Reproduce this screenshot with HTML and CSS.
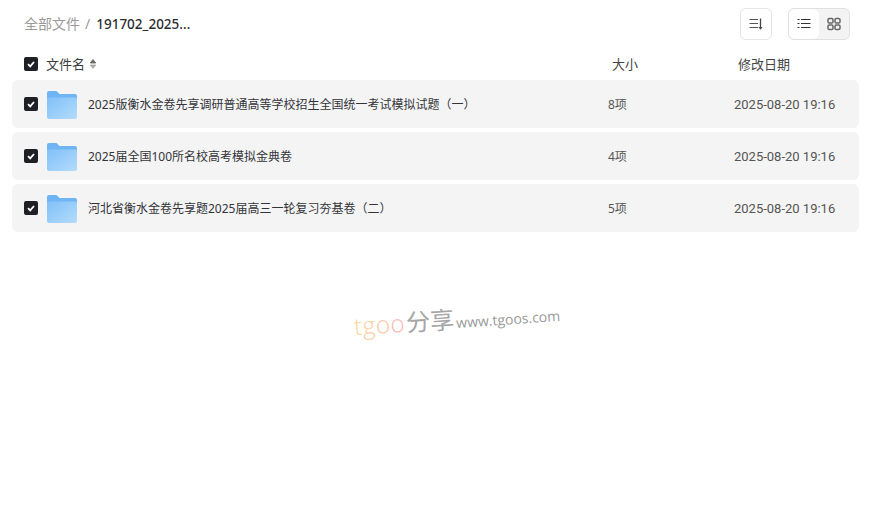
FILE: index.html
```html
<!DOCTYPE html>
<html lang="zh-CN">
<head>
<meta charset="utf-8">
<title>文件列表</title>
<link rel="stylesheet" href="styles.css">
</head>
<body>
<div class="page">
  <header class="topbar">
    <nav class="crumbs">
      <span class="crumb-root">全部文件</span>
      <span class="crumb-sep">/</span>
      <span class="crumb-current">191702_2025...</span>
    </nav>
    <div class="tools">
      <button class="tool-btn" type="button" aria-label="排序">
        <svg width="14" height="14" viewBox="0 0 14 14" fill="none" stroke="#555" stroke-width="1.2"><path d="M0.500 2.500h8.500M0.500 6.500h8.500M0.500 10.500h8.500"/><path d="M11.500 1.500v10" stroke="#444" stroke-width="1.3"/><path d="M9.500 10l2 2.800 2-2.800z" fill="#444" stroke="none"/></svg>
      </button>
      <div class="view-switch">
        <button class="view-btn active" type="button" aria-label="列表">
          <svg width="14" height="14" viewBox="0 0 14 14" fill="none" stroke="#333" stroke-width="1.2"><path d="M0.500 2.500h2M0.500 6.500h2M0.500 10.500h2M4 2.500h9.500M4 6.500h9.500M4 10.500h9.500"/></svg>
        </button>
        <button class="view-btn" type="button" aria-label="网格">
          <svg width="14" height="14" viewBox="0 0 14 14" fill="none" stroke="#666" stroke-width="1.5"><rect x="1" y="1.500" width="5" height="4.500" rx="1.300"/><rect x="8" y="1.500" width="5" height="4.500" rx="1.300"/><rect x="1" y="8" width="5" height="4.500" rx="1.300"/><rect x="8" y="8" width="5" height="4.500" rx="1.300"/></svg>
        </button>
      </div>
    </div>
  </header>

  <div class="list-head">
    <span class="check"><svg width="10" height="10" viewBox="0 0 10 10" fill="none" stroke="#fff" stroke-width="1.8"><path d="M2 5.200l2.200 2.200L8 3"/></svg></span>
    <span class="head-name">文件名
      <svg class="sort" width="8" height="12" viewBox="0 0 8 12"><path d="M4 1.500L6.800 5H1.200z" fill="#666" stroke="#666" stroke-linejoin="round" stroke-width=".8"/><path d="M4 10.500L1.200 7h5.600z" fill="#aaa" stroke="#aaa" stroke-linejoin="round" stroke-width=".8"/></svg>
    </span>
    <span class="head-size">大小</span>
    <span class="head-date">修改日期</span>
  </div>

  <ul class="rows">
    <li class="row">
      <span class="check"><svg width="10" height="10" viewBox="0 0 10 10" fill="none" stroke="#fff" stroke-width="1.8"><path d="M2 5.200l2.200 2.200L8 3"/></svg></span>
      <svg class="folder" width="30" height="28" viewBox="0 0 30 28"><defs><linearGradient id="fb" x1="0" y1="0" x2="1" y2="1"><stop offset="0" stop-color="#80c0f8"/><stop offset="1" stop-color="#b4dcfc"/></linearGradient></defs><path d="M0 2a2 2 0 0 1 2-2h7.500l3 3H28a2 2 0 0 1 2 2v3H0z" fill="#6fb5f3"/><path d="M0 6.500h28.500a1.500 1.500 0 0 1 1.500 1.500V26a2 2 0 0 1-2 2H2a2 2 0 0 1-2-2z" fill="url(#fb)"/></svg>
      <span class="name">2025版衡水金卷先享调研普通高等学校招生全国统一考试模拟试题（一）</span>
      <span class="size">8项</span>
      <span class="date">2025-08-20 19:16</span>
    </li>
    <li class="row">
      <span class="check"><svg width="10" height="10" viewBox="0 0 10 10" fill="none" stroke="#fff" stroke-width="1.8"><path d="M2 5.200l2.200 2.200L8 3"/></svg></span>
      <svg class="folder" width="30" height="28" viewBox="0 0 30 28"><path d="M0 2a2 2 0 0 1 2-2h7.500l3 3H28a2 2 0 0 1 2 2v3H0z" fill="#6fb5f3"/><path d="M0 6.500h28.500a1.500 1.500 0 0 1 1.500 1.500V26a2 2 0 0 1-2 2H2a2 2 0 0 1-2-2z" fill="url(#fb)"/></svg>
      <span class="name">2025届全国100所名校高考模拟金典卷</span>
      <span class="size">4项</span>
      <span class="date">2025-08-20 19:16</span>
    </li>
    <li class="row">
      <span class="check"><svg width="10" height="10" viewBox="0 0 10 10" fill="none" stroke="#fff" stroke-width="1.8"><path d="M2 5.200l2.200 2.200L8 3"/></svg></span>
      <svg class="folder" width="30" height="28" viewBox="0 0 30 28"><path d="M0 2a2 2 0 0 1 2-2h7.500l3 3H28a2 2 0 0 1 2 2v3H0z" fill="#6fb5f3"/><path d="M0 6.500h28.500a1.500 1.500 0 0 1 1.500 1.500V26a2 2 0 0 1-2 2H2a2 2 0 0 1-2-2z" fill="url(#fb)"/></svg>
      <span class="name">河北省衡水金卷先享题2025届高三一轮复习夯基卷（二）</span>
      <span class="size">5项</span>
      <span class="date">2025-08-20 19:16</span>
    </li>
  </ul>
</div>
<div class="watermark"><span class="wm-t">t</span><span class="wm-g">g</span><span class="wm-o1">o</span><span class="wm-o2">o</span><span class="wm-cn">分享</span><span class="wm-url">www.tgoos.com</span></div>
</body>
</html>
```
FILE: styles.css
```css
* { box-sizing: border-box; }
html, body { margin: 0; padding: 0; background: #fff; }
body {
  font-family: "Noto Sans", "Noto Sans CJK SC", sans-serif;
  color: #25262b;
  overflow: hidden;
}
.page { padding: 8px 15px 0 12px; }
.topbar {
  display: flex;
  justify-content: space-between;
  align-items: center;
  height: 32px;
  padding: 0 9px 0 12px;
}
.crumbs { display: flex; align-items: center; font-size: 14px; line-height: 30px; height: 30px; margin-top: -1px; }
.crumb-root { color: #999; }
.crumb-sep { color: #999; margin: 0 6px 0 5px; }
.crumb-current { font-weight: 500; color: #2c2d32; font-size: 13.500px; }
.tools { display: flex; gap: 16px; }
.tool-btn {
  width: 32px; height: 32px;
  display: flex; align-items: center; justify-content: center;
  padding: 0;
  background: #fff;
  border: 1px solid #e6e6e8;
  border-radius: 6px;
}
.view-switch {
  display: flex;
  width: 62px; height: 32px;
  background: #f3f3f3;
  border: 1px solid #e0e0e2;
  border-radius: 6px;
  overflow: hidden;
}
.view-btn {
  flex: 1;
  display: flex; align-items: center; justify-content: center;
  padding: 0;
  border: 0;
  background: transparent;
}
.view-btn.active { background: #fff; border-radius: 6px; }
.list-head {
  display: flex;
  align-items: center;
  height: 40px;
  padding: 8px 0 0 12px;
  font-size: 13px;
  line-height: 16px;
  color: #444;
}
.check {
  flex: none;
  width: 14px; height: 14px;
  display: flex; align-items: center; justify-content: center;
  background: #1f2026;
  border-radius: 2px;
}
.head-name { width: 566px; margin-left: 8px; display: flex; align-items: center; gap: 4px; color: #3a3b40; }
.head-size { width: 126px; }
.head-date { flex: none; }
.rows { list-style: none; margin: 0; padding: 0; display: flex; flex-direction: column; gap: 4px; }
.row {
  display: flex;
  align-items: center;
  height: 48px;
  padding-left: 12px;
  background: #f4f4f4;
  border-radius: 6px;
  font-size: 12px;
}
.folder { flex: none; margin: 2px 11px 0 9px; }
.name { width: 520px; color: #33343a; }
.size { width: 126px; color: #555; }
.date { color: #555; font-family: "Roboto", "Noto Sans", sans-serif; font-size: 13px; }
.watermark {
  position: absolute;
  left: 354px;
  top: 303px;
  display: flex;
  align-items: baseline;
  transform: rotate(-4deg);
  font-family: "Open Sans", "Noto Sans CJK SC", sans-serif;
  font-size: 24px;
  line-height: 32px;
  white-space: nowrap;
}
.wm-t, .wm-g, .wm-o1, .wm-o2 { font-weight: 300; letter-spacing: .6px; }
.wm-t { color: #fbd79a; }
.wm-g { color: #fcd0a0; }
.wm-o1 { color: #fdc4a4; }
.wm-o2 { color: #fcb6ae; }
.wm-cn { color: #a6a6a6; margin-left: 1px; }
.wm-url { color: #999; font-size: 14px; margin-left: 2px; }
```
